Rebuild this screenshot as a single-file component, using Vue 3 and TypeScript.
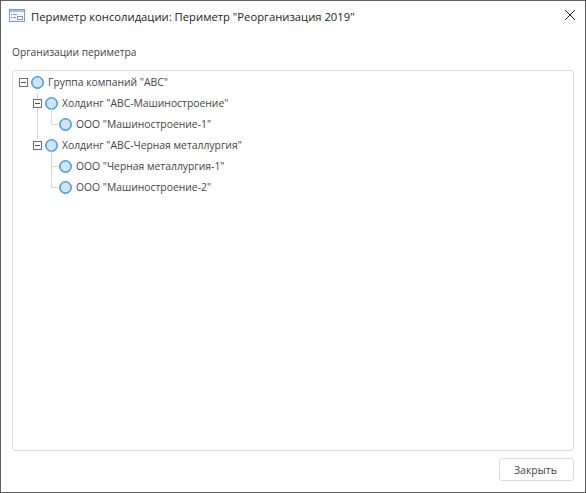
<template>
  <div class="dialog">
    <header class="titlebar">
      <svg class="win-icon" width="16" height="13" viewBox="0 0 16 13">
        <rect x="0.5" y="0.5" width="15" height="12" fill="#f4f7fb" stroke="#7f9cc4" />
        <rect x="1" y="1" width="14" height="2" fill="#a9bfdc" />
        <rect x="2" y="5" width="1" height="1" fill="#6d7f99" />
        <rect x="4" y="5" width="4" height="1" fill="#8a97aa" />
        <rect x="2" y="8" width="1" height="1" fill="#6d7f99" />
        <rect x="4" y="8" width="3" height="1" fill="#8a97aa" />
        <rect x="8.5" y="7.5" width="5" height="3" fill="#fff" stroke="#8a97aa" />
      </svg>
      <span class="title">Периметр консолидации: Периметр "Реорганизация 2019"</span>
      <svg class="close" width="12" height="12" viewBox="0 0 12 12">
        <path d="M1 1L11 11M11 1L1 11" stroke="#222" stroke-width="1" fill="none" />
      </svg>
    </header>
    <main class="body">
      <div class="label">Организации периметра</div>
      <div class="tree">
        <div v-for="node in nodes" :key="node.name" class="row" :class="'lvl' + node.level">
          <span v-if="node.line" class="branch" :class="{ long: node.long }" />
          <span v-if="node.toggle" class="toggle" />
          <span class="dot" />
          <span class="name">{{ node.name }}</span>
        </div>
      </div>
    </main>
    <footer class="footer">
      <button class="btn">Закрыть</button>
    </footer>
  </div>
</template>

<script setup lang="ts">
interface TreeNode {
  name: string
  level: number
  toggle?: boolean
  line?: boolean
  long?: boolean
}

const nodes: TreeNode[] = [
  { name: 'Группа компаний "АВС"', level: 0, toggle: true },
  { name: 'Холдинг "АВС-Машиностроение"', level: 1, toggle: true },
  { name: 'ООО "Машиностроение-1"', level: 2, line: true },
  { name: 'Холдинг "АВС-Черная металлургия"', level: 1, toggle: true },
  { name: 'ООО "Черная металлургия-1"', level: 2, line: true },
  { name: 'ООО "Машиностроение-2"', level: 2, line: true, long: true }
]
</script>

<style>
html, body { margin: 0; background: #fff; }
</style>

<style scoped>
.dialog { width: 586px; height: 493px; box-sizing: border-box; border: 1px solid #5f5f5f; display: flex; flex-direction: column; background: #fff; font-family: "Open Sans", "Liberation Sans", sans-serif; color: #444; overflow: hidden; }
.titlebar { height: 30px; display: flex; align-items: center; padding: 0 9px 0 8px; flex: none; }
.win-icon { flex: none; margin-right: 6px; margin-top: -1px; }
.title { flex: 1; font-size: 11.25px; color: #222; white-space: nowrap; }
.close { flex: none; margin-top: -2px; }
.body { flex: 1; display: flex; flex-direction: column; padding: 14px 11px 0; min-height: 0; }
.label { font-size: 10.2px; line-height: 15px; margin-bottom: 10px; color: #444; }
.tree { flex: 1; border: 1px solid #dcdcdc; border-radius: 3px; padding: 1px 0 0; }
.row { position: relative; height: 21px; display: flex; align-items: center; font-size: 10.35px; color: #444; white-space: nowrap; }
.name { padding-bottom: 2px; }
.lvl0 { padding-left: 6px; }
.lvl1 { padding-left: 20px; }
.lvl2 { padding-left: 46px; }
.toggle { width: 7px; height: 7px; border: 1px solid #6e6e6e; background: #fff; position: relative; margin-right: 3px; flex: none; z-index: 1; }
.toggle::after { content: ""; position: absolute; left: 1px; right: 1px; top: 3px; height: 1px; background: #555; }
.dot { width: 11px; height: 11px; border: 1px solid #3f97d6; border-radius: 50%; background: #cfe5f7; box-shadow: inset 0 0 0 0.6px #3f97d6; flex: none; margin-right: 4px; margin-top: -1px; }
.lvl1::before { content: ""; position: absolute; left: 24px; top: 0; height: 7px; width: 1px; background: #d8d8d8; }
.lvl1:nth-child(4)::before { top: -28px; height: 32px; }
.branch { position: absolute; left: 38px; top: -6px; width: 6px; height: 16px; border-left: 1px solid #d8d8d8; border-bottom: 1px solid #d8d8d8; }
.branch.long { top: -10px; height: 20px; }
.footer { height: 41px; flex: none; display: flex; justify-content: flex-end; align-items: flex-start; padding: 7px 11px 0 0; box-sizing: border-box; }
.btn { width: 75px; height: 23px; border: 1px solid #dcdcdc; border-radius: 3px; background: #fff; font-family: inherit; font-size: 10.5px; color: #444; padding: 0 2px 0 0; }
</style>
